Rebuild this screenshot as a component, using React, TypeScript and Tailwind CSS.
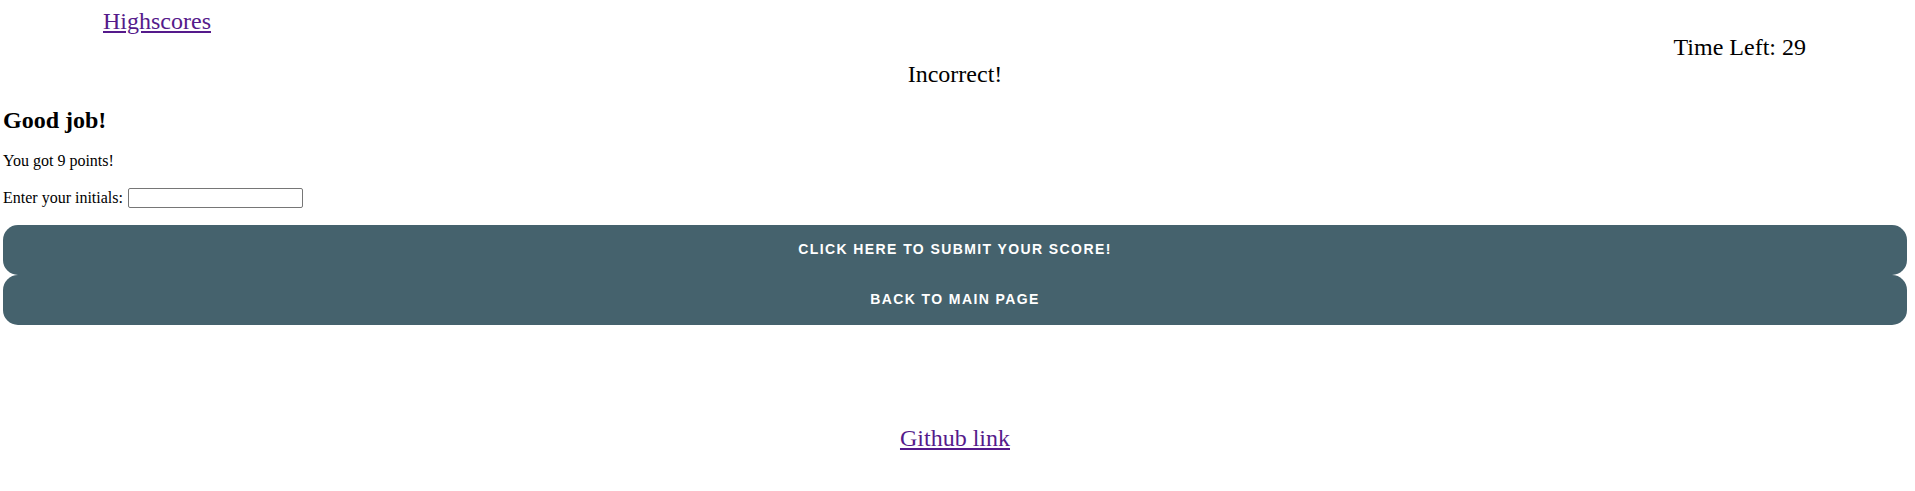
import React from 'react';

export default function App() {
  return (
    <div className="min-h-screen bg-white font-['Times_New_Roman','Liberation_Serif',serif] text-black">
      <div className="flex items-start justify-between">
        <a href="#" className="ml-[103px] mt-[7px] text-[24px] leading-[28px] text-[#551a8b] underline">
          Highscores
        </a>
        <p className="mr-[109px] mt-[33px] text-[24px] leading-[28px]">Time Left: 29</p>
      </div>

      <p className="-mt-[1px] pr-[5px] text-center text-[24px] leading-[28px]">Incorrect!</p>

      <div className="pl-[3px] pr-[8px]">
        <h2 className="mt-[18px] text-[24px] font-bold leading-[28px]">Good job!</h2>
        <p className="mt-[18px] text-[16px] leading-[18px]">You got 9 points!</p>
        <div className="mt-[17px] flex h-[22px] items-center gap-[5px] text-[16px] leading-[18px]">
          <label htmlFor="initials">Enter your initials:</label>
          <input
            id="initials"
            type="text"
            className="h-[20px] w-[175px] rounded-[2px] border border-[#767676] bg-white px-1 text-[13px]"
          />
        </div>

        <button className="mt-[16px] flex h-[50px] w-full items-center justify-center rounded-[15px] border-0 bg-[#45626d] pb-[2px] font-['Liberation_Sans',Arial,sans-serif] text-[14px] font-bold uppercase tracking-[0.1em] text-white">
          Click here to submit your score!
        </button>
        <button className="flex h-[50px] w-full items-center justify-center rounded-[15px] border-0 bg-[#45626d] pb-[2px] font-['Liberation_Sans',Arial,sans-serif] text-[14px] font-bold uppercase tracking-[0.1em] text-white">
          Back to main page
        </button>
      </div>

      <div className="mt-[99px] pr-[5px] text-center">
        <a href="#" className="text-[24px] leading-[28px] text-[#551a8b] underline">
          Github link
        </a>
      </div>
    </div>
  );
}
